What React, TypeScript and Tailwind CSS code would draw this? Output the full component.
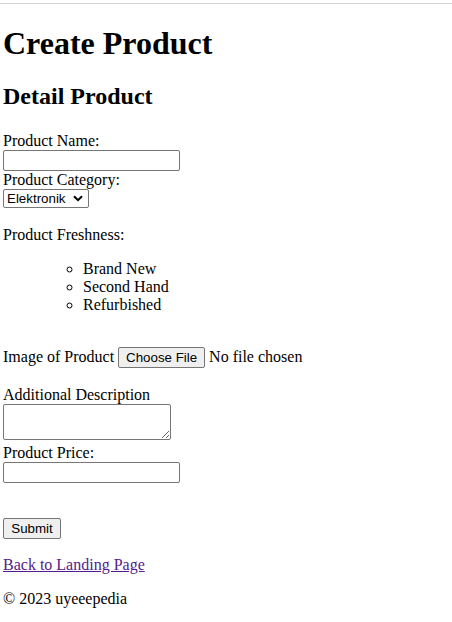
import { useState } from "react";

const control =
  "font-['Liberation_Sans',Arial,sans-serif] text-[13.33px] leading-[normal] text-black";

export default function App() {
  const [category, setCategory] = useState("Elektronik");

  return (
    <div className="min-h-[622px] bg-white font-['Liberation_Serif','Times_New_Roman',serif] text-[16px] leading-[normal] text-black">
      <div className="h-[4px] border-b border-[#d3d3d3]" />

      <div className="px-[3px]">
        <h1 className="mt-[21px] text-[32px] font-bold">Create Product</h1>
        <h2 className="mt-[21px] text-[24px] font-bold">Detail Product</h2>

        <form className="mt-[22px]" onSubmit={(e) => e.preventDefault()}>
          <label className="block">Product Name:</label>
          <input
            type="text"
            className="block h-[21px] w-[177px] rounded-[2px] border border-[#767676] px-[2px] outline-none"
          />

          <label className="block">Product Category:</label>
          <div className="relative inline-block">
            <select
              value={category}
              onChange={(e) => setCategory(e.target.value)}
              className={`${control} block h-[19px] w-[86px] appearance-none rounded-[2px] border border-[#767676] bg-white pl-[3px] outline-none`}
            >
              <option>Elektronik</option>
              <option>Fashion</option>
              <option>Rumah Tangga</option>
            </select>
            <svg
              className="pointer-events-none absolute right-[6px] top-[6px]"
              width="10"
              height="7"
              viewBox="0 0 10 7"
            >
              <path d="M1 1.2 L5 5.2 L9 1.2" fill="none" stroke="#000" strokeWidth="2" />
            </svg>
          </div>

          <p className="mt-[18px]">Product Freshness:</p>
          <ul className="my-4 list-[circle] pl-[80px]">
            <li>Brand New</li>
            <li>Second Hand</li>
            <li>Refurbished</li>
          </ul>

          <div className="mt-[32px] flex h-[22px] items-center">
            <span>Image of Product</span>
            <span
              className={`${control} ml-[4px] inline-flex h-[21px] w-[87px] items-center justify-center rounded-[2px] border border-[#767676] bg-[#efefef]`}
            >
              Choose File
            </span>
            <span className="ml-[4px]">No file chosen</span>
          </div>

          <label className="mt-[18px] block">Additional Description</label>
          <textarea className="block h-[36px] w-[168px] rounded-[2px] border border-[#767676] outline-none" />

          <label className="mt-[4px] block">Product Price:</label>
          <input
            type="text"
            className="block h-[21px] w-[177px] rounded-[2px] border border-[#767676] px-[2px] outline-none"
          />

          <button
            type="submit"
            className={`${control} mt-[35px] block h-[21px] w-[58px] rounded-[2px] border border-[#767676] bg-[#efefef]`}
          >
            Submit
          </button>
        </form>

        <p className="mt-[17px]">
          <a href="#" className="text-[#551a8b] underline">
            Back to Landing Page
          </a>
        </p>
        <p className="mt-[16px]">© 2023 uyeeepedia</p>
      </div>
    </div>
  );
}
